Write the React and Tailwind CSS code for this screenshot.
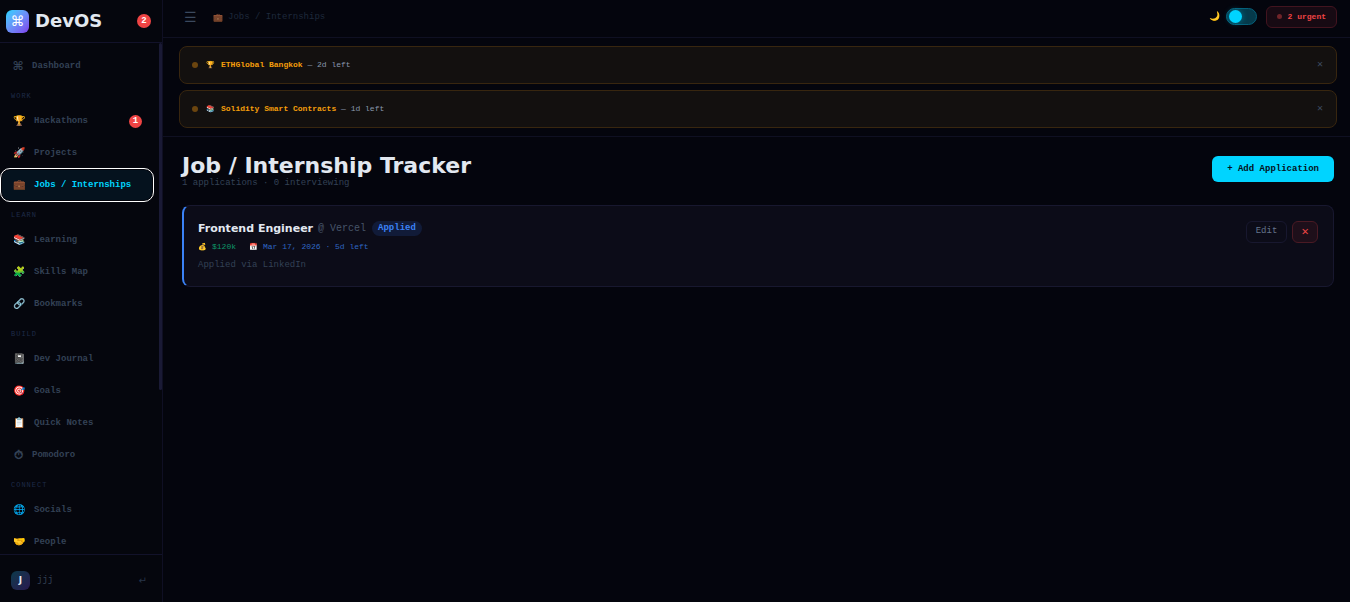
import React, { useState } from 'react';

const sections = [
  { title: '', items: [{ icon: '⌘', label: 'Dashboard', glyph: true }] },
  {
    title: 'WORK',
    items: [
      { icon: '🏆', label: 'Hackathons', badge: 1 },
      { icon: '🚀', label: 'Projects' },
      { icon: '💼', label: 'Jobs / Internships' },
    ],
  },
  {
    title: 'LEARN',
    items: [
      { icon: '📚', label: 'Learning' },
      { icon: '🧩', label: 'Skills Map' },
      { icon: '🔗', label: 'Bookmarks' },
    ],
  },
  {
    title: 'BUILD',
    items: [
      { icon: '📓', label: 'Dev Journal' },
      { icon: '🎯', label: 'Goals' },
      { icon: '📋', label: 'Quick Notes' },
      { icon: '⏱', label: 'Pomodoro', glyph: true },
    ],
  },
  {
    title: 'CONNECT',
    items: [
      { icon: '🌐', label: 'Socials' },
      { icon: '🤝', label: 'People' },
    ],
  },
];

const initialAlerts = [
  { id: 1, icon: '🏆', title: 'ETHGlobal Bangkok', left: '2d left' },
  { id: 2, icon: '📚', title: 'Solidity Smart Contracts', left: '1d left' },
];

function NavItem({ item, active, onSelect }) {
  return (
    <button
      onClick={onSelect}
      className={`mb-[2px] ml-[2px] flex h-[30px] w-[150px] items-center rounded-lg pl-[10px] pr-[10px] text-left text-[9px] font-bold ${
        active ? 'bg-[#05121e] text-[#00d4ff] outline-1 outline-offset-1 outline-white' : 'text-[#334155]'
      }`}
    >
      {item.glyph ? (
        <span className="w-[12px] shrink-0 text-center font-['DejaVu_Sans',sans-serif] text-[12px] font-bold leading-none">
          {item.icon}
        </span>
      ) : (
        <span className="ml-[1px] w-[13px] shrink-0 pt-px text-[10px] font-normal leading-none">{item.icon}</span>
      )}
      <span className="ml-[8px] flex-1 whitespace-nowrap pt-[2px]">{item.label}</span>
      {item.badge && (
        <span className="flex size-[13px] items-center justify-center rounded-full bg-[#ef4444] text-[9px] leading-none text-white">
          {item.badge}
        </span>
      )}
    </button>
  );
}

function Sidebar({ page, setPage }) {
  return (
    <aside className="flex w-[163px] shrink-0 flex-col border-r border-[#0f0f23] bg-[#05060d]">
      <div className="flex h-[43px] shrink-0 items-center border-b border-[#12122a] pl-[6px] pr-[11px]">
        <div className="flex size-[23px] items-center justify-center rounded-md bg-linear-135 from-[#00d4ff] to-[#7c3aed] font-['DejaVu_Sans',sans-serif] text-[14px] leading-none text-white">
          ⌘
        </div>
        <span className="ml-[6px] flex-1 font-['DejaVu_Sans',sans-serif] text-[18px] font-bold leading-none text-[#e2e8f0]">
          DevOS
        </span>
        <span className="flex size-[14px] items-center justify-center rounded-full bg-[#ef4444] text-[9px] font-bold leading-none text-white">
          2
        </span>
      </div>

      <div className="relative min-h-0 flex-1 overflow-hidden">
        <nav className="pt-[8px]">
          {sections.map((s) => (
            <div key={s.title}>
              {s.title && (
                <div className="h-[23px] pl-[11px] pt-[7px] text-[7px] leading-[12px] tracking-[1px] text-[#1e2b48]">
                  {s.title}
                </div>
              )}
              {s.items.map((item) => (
                <NavItem
                  key={item.label}
                  item={item}
                  active={item.label === page}
                  onSelect={() => setPage(item.label)}
                />
              ))}
            </div>
          ))}
        </nav>
        {/* scroll thumb */}
        <div className="absolute right-0 top-0 h-[68%] w-[3px] rounded-sm bg-[#1a1a35]" />
      </div>

      <div className="flex h-[48px] shrink-0 items-center border-t border-[#12122a] pl-[11px] pr-[15px] pt-[4px]">
        <div className="flex size-[19px] items-center justify-center rounded-md bg-linear-135 from-[#06394b] to-[#26184f] font-['DejaVu_Sans',sans-serif] text-[9px] font-bold text-[#e2e8f0]">
          J
        </div>
        <span className="ml-[7px] flex-1 text-[9px] text-[#334155]">jjj</span>
        <button
          aria-label="Log out"
          className="font-['DejaVu_Sans',sans-serif] text-[10px] leading-none text-[#273449]"
        >
          ↵
        </button>
      </div>
    </aside>
  );
}

function Topbar({ page, dark, setDark }) {
  return (
    <header className="flex h-[38px] shrink-0 items-center border-b border-[#0f1022] pb-[4px] pl-[20px] pr-[13px]">
      <button aria-label="Toggle menu" className="w-[14px] pt-[2px] text-[14px] leading-none text-[#3b495e]">☰</button>
      <div className="ml-[15px] flex items-center gap-[5px] pt-[2px] text-[9px] text-[#1e293b]">
        <span className="w-[11px] text-center text-[8px]">💼</span>
        <span>{page}</span>
      </div>
      <div className="ml-auto flex items-center">
        <span className="mr-[6px] pt-px text-[9px] leading-none">🌙</span>
        <button
          role="switch"
          aria-checked={dark}
          aria-label="Dark mode"
          onClick={() => setDark(!dark)}
          className={`flex h-[17px] w-[31px] items-center rounded-full border border-[#05607a] bg-[#053a4b] px-[2px] ${
            dark ? 'justify-start' : 'justify-end'
          }`}
        >
          <span className="size-[13px] rounded-full bg-[#00d4ff] shadow-[0_0_6px_#00d4ff66]" />
        </button>
        <button className="ml-[9px] flex h-[22px] items-center gap-[6px] rounded-md border border-[#42141f] bg-[#170a13] px-[10px] text-[8px] font-bold text-[#ef4444]">
          <span className="size-[5px] rounded-full bg-[#6f2429]" />
          2 urgent
        </button>
      </div>
    </header>
  );
}

function Alerts() {
  const [alerts, setAlerts] = useState(initialAlerts);
  if (alerts.length === 0) return null;
  return (
    <div className="flex shrink-0 flex-col gap-[6px] border-b border-[#0f1022] pb-2 pl-4 pr-[13px] pt-2">
      {alerts.map((a) => (
        <div
          key={a.id}
          className="flex h-[38px] items-center rounded-lg border border-[#38260f] bg-[#13100f] pl-3 pr-[13px] text-[8px]"
        >
          <span className="size-[6px] rounded-full bg-[#6b450f]" />
          <span className="ml-[8px] w-[9px] text-center text-[7px]">{a.icon}</span>
          <p className="ml-[6px] flex-1 text-[#8a98ad]">
            <b className="text-[#f59e0b]">{a.title}</b> — {a.left}
          </p>
          <button
            aria-label={`Dismiss ${a.title}`}
            onClick={() => setAlerts(alerts.filter((x) => x.id !== a.id))}
            className="text-[10px] leading-none text-[#3b495e]"
          >
            ✕
          </button>
        </div>
      ))}
    </div>
  );
}

function JobCard() {
  return (
    <article className="flex items-start justify-between rounded-lg border border-l-2 border-[#18182f] border-l-[#3b82f6] bg-[#0c0c18] pb-[14px] pl-[14px] pr-[15px] pt-[15px]">
      <div>
        <div className="flex h-[15px] items-center">
          <h2 className="font-['DejaVu_Sans',sans-serif] text-[11px] font-bold leading-none text-[#e2e8f0]">
            Frontend Engineer
          </h2>
          <span className="ml-[5px] text-[10px] text-[#475569]">@ Vercel</span>
          <span className="ml-[6px] rounded-full bg-[#111b38] px-[6px] text-[9px] font-bold leading-[15px] text-[#3b82f6]">
            Applied
          </span>
        </div>
        <div className="mt-[4px] flex h-[14px] items-center text-[8px]">
          <span className="w-[9px] text-center text-[7px]">💰</span>
          <span className="ml-[5px] text-[#0c9568]">$120k</span>
          <span className="ml-[13px] w-[9px] text-center text-[7px]">📅</span>
          <span className="ml-[5px] text-[#2f66c2]">Mar 17, 2026 · 5d left</span>
        </div>
        <p className="mt-[5px] text-[9px] leading-[13px] text-[#334155]">Applied via LinkedIn</p>
      </div>
      <div className="flex gap-[5px]">
        <button className="h-[22px] w-[41px] rounded-md border border-[#18182f] text-[9px] text-[#64748b]">Edit</button>
        <button
          aria-label="Delete"
          className="h-[22px] w-[26px] rounded-md border border-[#4a1a24] bg-[#1e0f1a] text-[12px] leading-none text-[#ef4444]"
        >
          ✕
        </button>
      </div>
    </article>
  );
}

function App() {
  const [page, setPage] = useState('Jobs / Internships');
  const [dark, setDark] = useState(true);

  return (
    <div className="flex h-screen overflow-hidden bg-[#04050d] font-['Liberation_Mono',monospace] text-[#e2e8f0]">
      <Sidebar page={page} setPage={setPage} />
      <div className="flex min-w-0 flex-1 flex-col">
        <Topbar page={page} dark={dark} setDark={setDark} />
        <Alerts />
        <main className="flex-1 overflow-hidden pl-[19px] pr-4 pt-[19px]">
          <div className="mb-[15px] flex items-start justify-between">
            <div>
              <h1 className="font-['DejaVu_Sans',sans-serif] text-[22px] font-bold leading-[20px] text-[#e2e8f0]">
                Job / Internship Tracker
              </h1>
              <p className="text-[9px] leading-[14px] text-[#334155]">1 applications · 0 interviewing</p>
            </div>
            <button className="h-[26px] rounded-md bg-[#00d4ff] px-[15px] pt-px text-[9px] font-bold text-[#03121c]">
              + Add Application
            </button>
          </div>
          <JobCard />
        </main>
      </div>
    </div>
  );
}

export default App;
